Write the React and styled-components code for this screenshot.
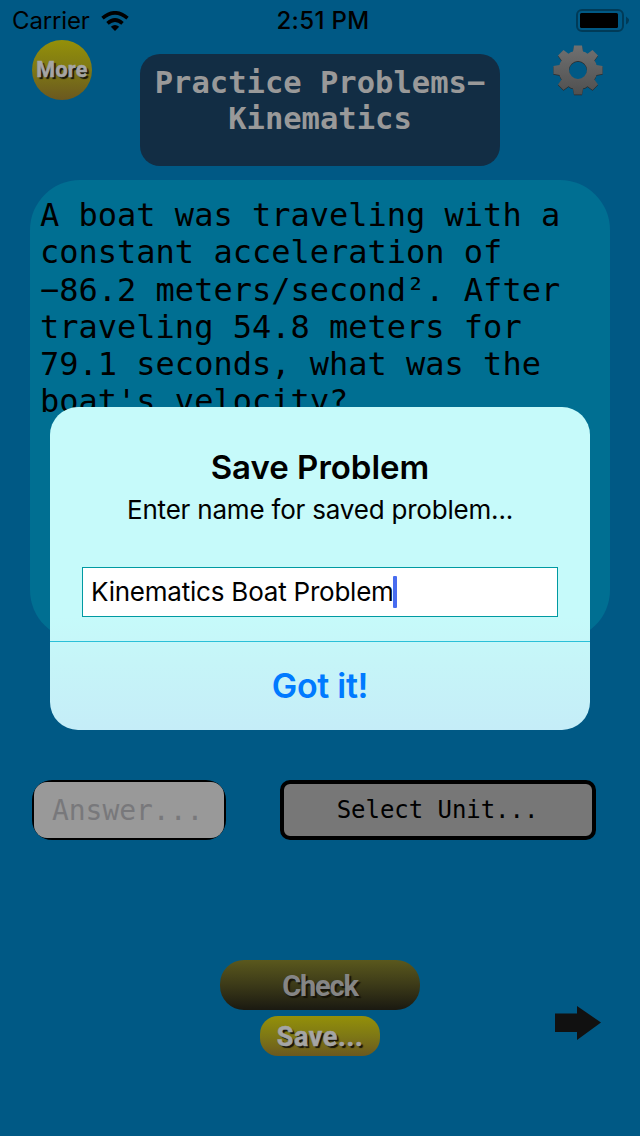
import React from "react";
import styled, { createGlobalStyle } from "styled-components";

const GlobalStyle = createGlobalStyle`
  * { box-sizing: border-box; }
  body { margin: 0; background: #005985; }
`;

const mono = '"DejaVu Sans Mono", monospace';
const sans = 'Inter, "Liberation Sans", sans-serif';

const Screen = styled.div`
  position: relative;
  display: flex;
  flex-direction: column;
  width: 640px;
  height: 1136px;
  overflow: hidden;
  background: #005985;
  color: #000;
  font-family: ${sans};
`;

const StatusBar = styled.header`
  display: grid;
  grid-template-columns: 1fr auto 1fr;
  align-items: center;
  height: 40px;
  padding: 1px 11px 0 12px;
  font-size: 24px;
  line-height: 39px;
`;

const Carrier = styled.div`
  display: flex;
  align-items: center;
  gap: 11px;
  letter-spacing: -0.15px;
`;

const Clock = styled.div`
  padding-left: 5px;
  font-weight: 500;
  letter-spacing: 0.35px;
`;

const BatterySlot = styled.div`
  display: flex;
  justify-content: flex-end;
`;

const TopRow = styled.div`
  display: grid;
  grid-template-columns: 108px 360px 1fr;
  align-items: start;
  height: 140px;
  padding: 0 36px 0 32px;
`;

const PillButton = styled.button`
  display: flex;
  align-items: center;
  justify-content: center;
  padding: ${(p) => p.$drop || 0}px 0 0;
  border: 0;
  width: ${(p) => p.$width}px;
  height: ${(p) => p.$height}px;
  border-radius: ${(p) => p.$radius}px;
  background: ${(p) =>
    p.$dim
      ? "linear-gradient(#5a581d, #3c3a18 50%, #1a1911)"
      : "linear-gradient(#949009, #7e7815 50%, #6b581f)"};
  color: ${(p) => (p.$dim ? "#858585" : "#a5a5a5")};
  font: bold ${(p) => p.$size}px/1 Roboto, sans-serif;
  letter-spacing: ${(p) => p.$tracking || 0}px;
  -webkit-text-stroke: ${(p) => (p.$dim ? 0 : 0.5)}px currentColor;
  text-shadow: 2px 2px 1px #16140a;
`;

const Title = styled.h1`
  width: 360px;
  height: 112px;
  margin: 14px 0 0;
  padding-top: 11px;
  border-radius: 20px;
  background: #122d44;
  color: #999;
  font: bold 30.5px/36px ${mono};
  text-align: center;
`;

const GearSlot = styled.div`
  justify-self: end;
  padding-top: 4px;
`;

const Question = styled.p`
  width: 580px;
  height: 460px;
  margin: 0 30px;
  padding: 17px 10px;
  border-radius: 50px;
  background: #006f92;
  font: 32px/37.25px ${mono};
`;

const AnswerRow = styled.div`
  display: flex;
  gap: 54px;
  margin: 140px 0 0 32px;
`;

const AnswerField = styled.div`
  width: 194px;
  height: 60px;
  padding: 2px;
  border-radius: 20px;
  overflow: hidden;
  background: #000;
`;

const AnswerHint = styled.div`
  height: 56px;
  padding: 1px 0 0 18px;
  border-radius: 13px;
  background: #999;
  color: #78787b;
  font: 28px/56px ${mono};
  letter-spacing: -0.05px;
`;

const UnitPicker = styled.div`
  width: 316px;
  height: 60px;
  padding: 1px 1px 0 0;
  border: 4px solid #000;
  border-radius: 10px;
  background: #777;
  font: 24px/51px ${mono};
  letter-spacing: -0.05px;
  text-align: center;
`;

const Footer = styled.footer`
  display: grid;
  grid-template-columns: 220px 200px 1fr;
  margin-top: 120px;
`;

const Actions = styled.div`
  grid-column: 2;
  display: flex;
  flex-direction: column;
  align-items: center;
  gap: 6px;
`;

const NextSlot = styled.div`
  padding: 46px 0 0 135px;
`;

const Dialog = styled.section`
  position: absolute;
  top: 407px;
  left: 50px;
  display: flex;
  flex-direction: column;
  width: 540px;
  height: 323px;
  border-radius: 28px;
  overflow: hidden;
  background: linear-gradient(#c6fafa 0%, #c6fafa 65%, #c6f5f8 78%, #c5edf8 100%);
  text-align: center;
`;

const DialogTitle = styled.h2`
  margin: 39px 0 0;
  font-size: 33px;
  font-weight: 600;
  line-height: 42px;
`;

const DialogMessage = styled.p`
  margin: 6px 0 0;
  font-size: 26px;
  line-height: 32px;
  letter-spacing: -0.2px;
`;

const NameField = styled.div`
  display: flex;
  align-items: center;
  height: 50px;
  margin: 41px 32px 24px;
  padding: 0 0 1px 8px;
  border: 1px solid #009aa2;
  background: #fff;
  font-size: 26px;
  letter-spacing: -0.22px;
  white-space: nowrap;
`;

const Caret = styled.span`
  width: 4px;
  height: 32px;
  margin-left: -1px;
  border-radius: 1px;
  background: #486cf0;
`;

const ConfirmButton = styled.button`
  flex: 1;
  padding: 0;
  border: 0;
  border-top: 1px solid #2ac0d8;
  background: transparent;
  color: #007aff;
  font: 600 34px/1 ${sans};
  letter-spacing: -0.3px;
`;

const Wifi = () => (
  <svg width="28" height="20" viewBox="0 0 28 20">
    <path d="M14 20 9.8 15.8Q14 12.3 18.2 15.8Z" fill="#000" />
    <path d="M6.5 12.4Q14 5.6 21.5 12.4M1.5 7.2Q14-3.6 26.5 7.2" fill="none" stroke="#000" strokeWidth="3.6" />
  </svg>
);

const Battery = () => (
  <svg width="53" height="23" viewBox="0 0 53 23">
    <rect x="1" y="1" width="46" height="21" rx="5" fill="none" stroke="#003b58" strokeWidth="2" />
    <rect x="4" y="4" width="38" height="15" rx="1.5" fill="#000" />
    <path d="M50 7.5q6 4 0 8Z" fill="#003b58" />
  </svg>
);

const gearPath =
  "M-4-24.5H4L5-18.5Q7.5-18 9.5-16.3L14.5-20 20-14.5 16.3-9.5Q18-7.5 18.5-5L24.5-4V4L18.5 5Q18 7.5 16.3 9.5L20 14.5 14.5 20 9.5 16.3Q7.5 18 5 18.5L4 24.5H-4L-5 18.5Q-7.5 18-9.5 16.3L-14.5 20-20 14.5-16.3 9.5Q-18 7.5-18.5 5L-24.5 4V-4L-18.5-5Q-18-7.5-16.3-9.5L-20-14.5-14.5-20-9.5-16.3Q-7.5-18-5-18.5ZM9 0A9 9 0 1 0-9 0 9 9 0 1 0 9 0Z";

const Gear = () => (
  <svg width="52" height="52" viewBox="-26 -26 52 52">
    <defs>
      <linearGradient id="steel" gradientUnits="userSpaceOnUse" x1="0" y1="-24" x2="0" y2="24">
        <stop offset="0" stopColor="#707070" />
        <stop offset="1" stopColor="#505050" />
      </linearGradient>
    </defs>
    <path fillRule="evenodd" fill="#292929" d={gearPath} transform="translate(0 0.8)" />
    <path fillRule="evenodd" fill="url(#steel)" d={gearPath} />
  </svg>
);

const Arrow = () => (
  <svg width="47" height="34" viewBox="0 0 47 34">
    <path d="M0 7.5H22V0L46 16.5 22 34V26H0Z" fill="#111" />
  </svg>
);

export default function App() {
  return (
    <Screen>
      <GlobalStyle />
      <StatusBar>
        <Carrier>
          Carrier <Wifi />
        </Carrier>
        <Clock>2:51 PM</Clock>
        <BatterySlot>
          <Battery />
        </BatterySlot>
      </StatusBar>
      <TopRow>
        <PillButton $width={60} $height={60} $radius={30} $size={21.5} $tracking={0.3}>
          More
        </PillButton>
        <Title>
          Practice Problems−
          <br />
          Kinematics
        </Title>
        <GearSlot>
          <Gear />
        </GearSlot>
      </TopRow>
      <Question>
        A boat was traveling with a<br />
        constant acceleration of<br />
        −86.2 meters/second². After<br />
        traveling 54.8 meters for<br />
        79.1 seconds, what was the<br />
        boat's velocity?
      </Question>
      <AnswerRow>
        <AnswerField>
          <AnswerHint>Answer...</AnswerHint>
        </AnswerField>
        <UnitPicker>Select Unit...</UnitPicker>
      </AnswerRow>
      <Footer>
        <Actions>
          <PillButton $dim $width={200} $height={50} $radius={24} $size={29} $tracking={-1.2} $drop={2}>
            Check
          </PillButton>
          <PillButton $width={120} $height={40} $radius={18} $size={27} $tracking={0.6} $drop={2}>
            Save...
          </PillButton>
        </Actions>
        <NextSlot>
          <Arrow />
        </NextSlot>
      </Footer>
      <Dialog>
        <DialogTitle>Save Problem</DialogTitle>
        <DialogMessage>Enter name for saved problem...</DialogMessage>
        <NameField>
          Kinematics Boat Problem
          <Caret />
        </NameField>
        <ConfirmButton>Got it!</ConfirmButton>
      </Dialog>
    </Screen>
  );
}
